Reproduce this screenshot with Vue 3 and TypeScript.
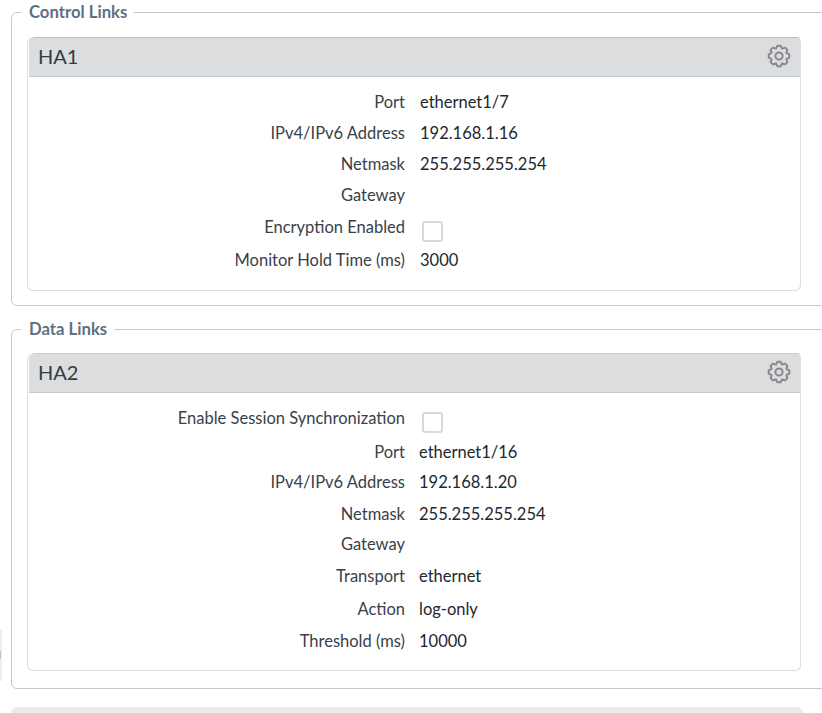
<script setup lang="ts">
interface Row { label: string; value?: string; check?: boolean; h: number }
interface Section { legend: string; title: string; rows: Row[]; cls: string }
const sections: Section[] = [
  {
    legend: 'Control Links', title: 'HA1', cls: 'first',
    rows: [
      { label: 'Port', value: 'ethernet1/7', h: 31 },
      { label: 'IPv4/IPv6 Address', value: '192.168.1.16', h: 31 },
      { label: 'Netmask', value: '255.255.255.254', h: 31 },
      { label: 'Gateway', h: 32 },
      { label: 'Encryption Enabled', check: true, h: 33 },
      { label: 'Monitor Hold Time (ms)', value: '3000', h: 31 },
    ],
  },
  {
    legend: 'Data Links', title: 'HA2', cls: 'second',
    rows: [
      { label: 'Enable Session Synchronization', check: true, h: 34 },
      { label: 'Port', value: 'ethernet1/16', h: 30 },
      { label: 'IPv4/IPv6 Address', value: '192.168.1.20', h: 32 },
      { label: 'Netmask', value: '255.255.255.254', h: 30 },
      { label: 'Gateway', h: 32 },
      { label: 'Transport', value: 'ethernet', h: 33 },
      { label: 'Action', value: 'log-only', h: 32 },
      { label: 'Threshold (ms)', value: '10000', h: 30 },
    ],
  },
]

// Eight-toothed gear outline, centred in a 24-unit box.
const gearPath = (() => {
  const teeth = 8
  const outer = 10.4
  const inner = 8
  const pts: string[] = []
  for (let i = 0; i < teeth; i++) {
    const a = (i * 2 * Math.PI) / teeth - Math.PI / 2
    const step = (2 * Math.PI) / teeth
    const offs: [number, number][] = [
      [-0.5, inner],
      [-0.2, outer],
      [0.2, outer],
    ]
    for (const [f, r] of offs) {
      const t = a + f * step
      pts.push(`${(12 + r * Math.cos(t)).toFixed(2)} ${(12 + r * Math.sin(t)).toFixed(2)}`)
    }
  }
  return `M${pts.join('L')}Z`
})()
</script>

<template>
  <div class="page">
    <div class="edge"><span class="edge-mark"></span></div>
    <fieldset v-for="s in sections" :key="s.title" class="group" :class="s.cls">
      <legend>{{ s.legend }}</legend>
      <div class="panel">
        <div class="head">
          <span class="title">{{ s.title }}</span>
          <svg class="gear" width="24" height="24" viewBox="0 0 24 24" fill="none" stroke="#87898c" stroke-width="2" stroke-linejoin="round">
            <path :d="gearPath" />
            <circle cx="12" cy="12" r="3.6" />
          </svg>
        </div>
        <div class="body">
          <div v-for="r in s.rows" :key="r.label" class="row" :style="{ height: r.h + 'px' }">
            <span class="label">{{ r.label }}</span>
            <span v-if="r.check" class="check"></span>
            <span v-else class="value">{{ r.value }}</span>
          </div>
        </div>
      </div>
    </fieldset>
    <div class="next"></div>
  </div>
</template>

<style>
html, body { margin: 0; overflow: hidden; background: #fff; }
</style>

<style scoped>
.page {
  position: relative;
  width: 822px;
  height: 713px;
  overflow: hidden;
  box-sizing: border-box;
  padding: 0 0 0 11px;
  font-family: Lato, "Liberation Sans", sans-serif;
  font-size: 16.5px;
  color: #333b45;
}
.edge {
  position: absolute;
  left: 0;
  top: 629px;
  width: 2px;
  height: 52px;
  background: #eeeeee;
}
.edge-mark {
  position: absolute;
  left: 0;
  top: 22px;
  width: 1px;
  height: 8px;
  background: #c4c4c4;
}
.group {
  box-sizing: border-box;
  width: 830px;
  margin: 0;
  padding: 0 0 14px 15px;
  border: 1px solid #c8c9ca;
  border-radius: 6px;
  min-width: 0;
}
.second { margin-top: 11px; padding-bottom: 17px; }
legend {
  margin-left: -6px;
  padding: 0 7px 0 8px;
  font-size: 16.7px;
  font-weight: 700;
  line-height: 24px;
  color: #5d7082;
}
.panel {
  width: 774px;
  box-sizing: border-box;
  margin-top: 13px;
  border: 1px solid #dcddde;
  border-top: 0;
  border-radius: 6px;
}
.second .panel { margin-top: 12px; }
.head {
  box-sizing: border-box;
  height: 40px;
  margin-left: 1px;
  display: flex;
  align-items: center;
  justify-content: space-between;
  padding: 0 9px 2px 9px;
  background: #dcddde;
  border-top: 1px solid #a9c4cf;
  border-bottom: 1px solid #c5cace;
  border-radius: 6px 3px 0 0;
}
.second .head { border-top-color: #c4ced3; }
.title {
  font-size: 20px;
  color: #333b45;
}
.body {
  padding: 10px 0 14px;
}
.row {
  display: flex;
  align-items: flex-start;
  line-height: 30px;
}
.label {
  width: 377px;
  text-align: right;
  color: #3a4149;
  flex: none;
}
.value {
  margin-left: 15px;
  color: #22272e;
}
.second .value { margin-left: 14px; }
.check {
  box-sizing: border-box;
  width: 21px;
  height: 21px;
  margin: 9px 0 0 17px;
  border: 2px solid #d8d9db;
  border-radius: 3px;
  background: #fff;
}
.next {
  width: 792px;
  height: 30px;
  margin-top: 18px;
  background: #ebebec;
  border-radius: 6px 6px 0 0;
}
</style>
